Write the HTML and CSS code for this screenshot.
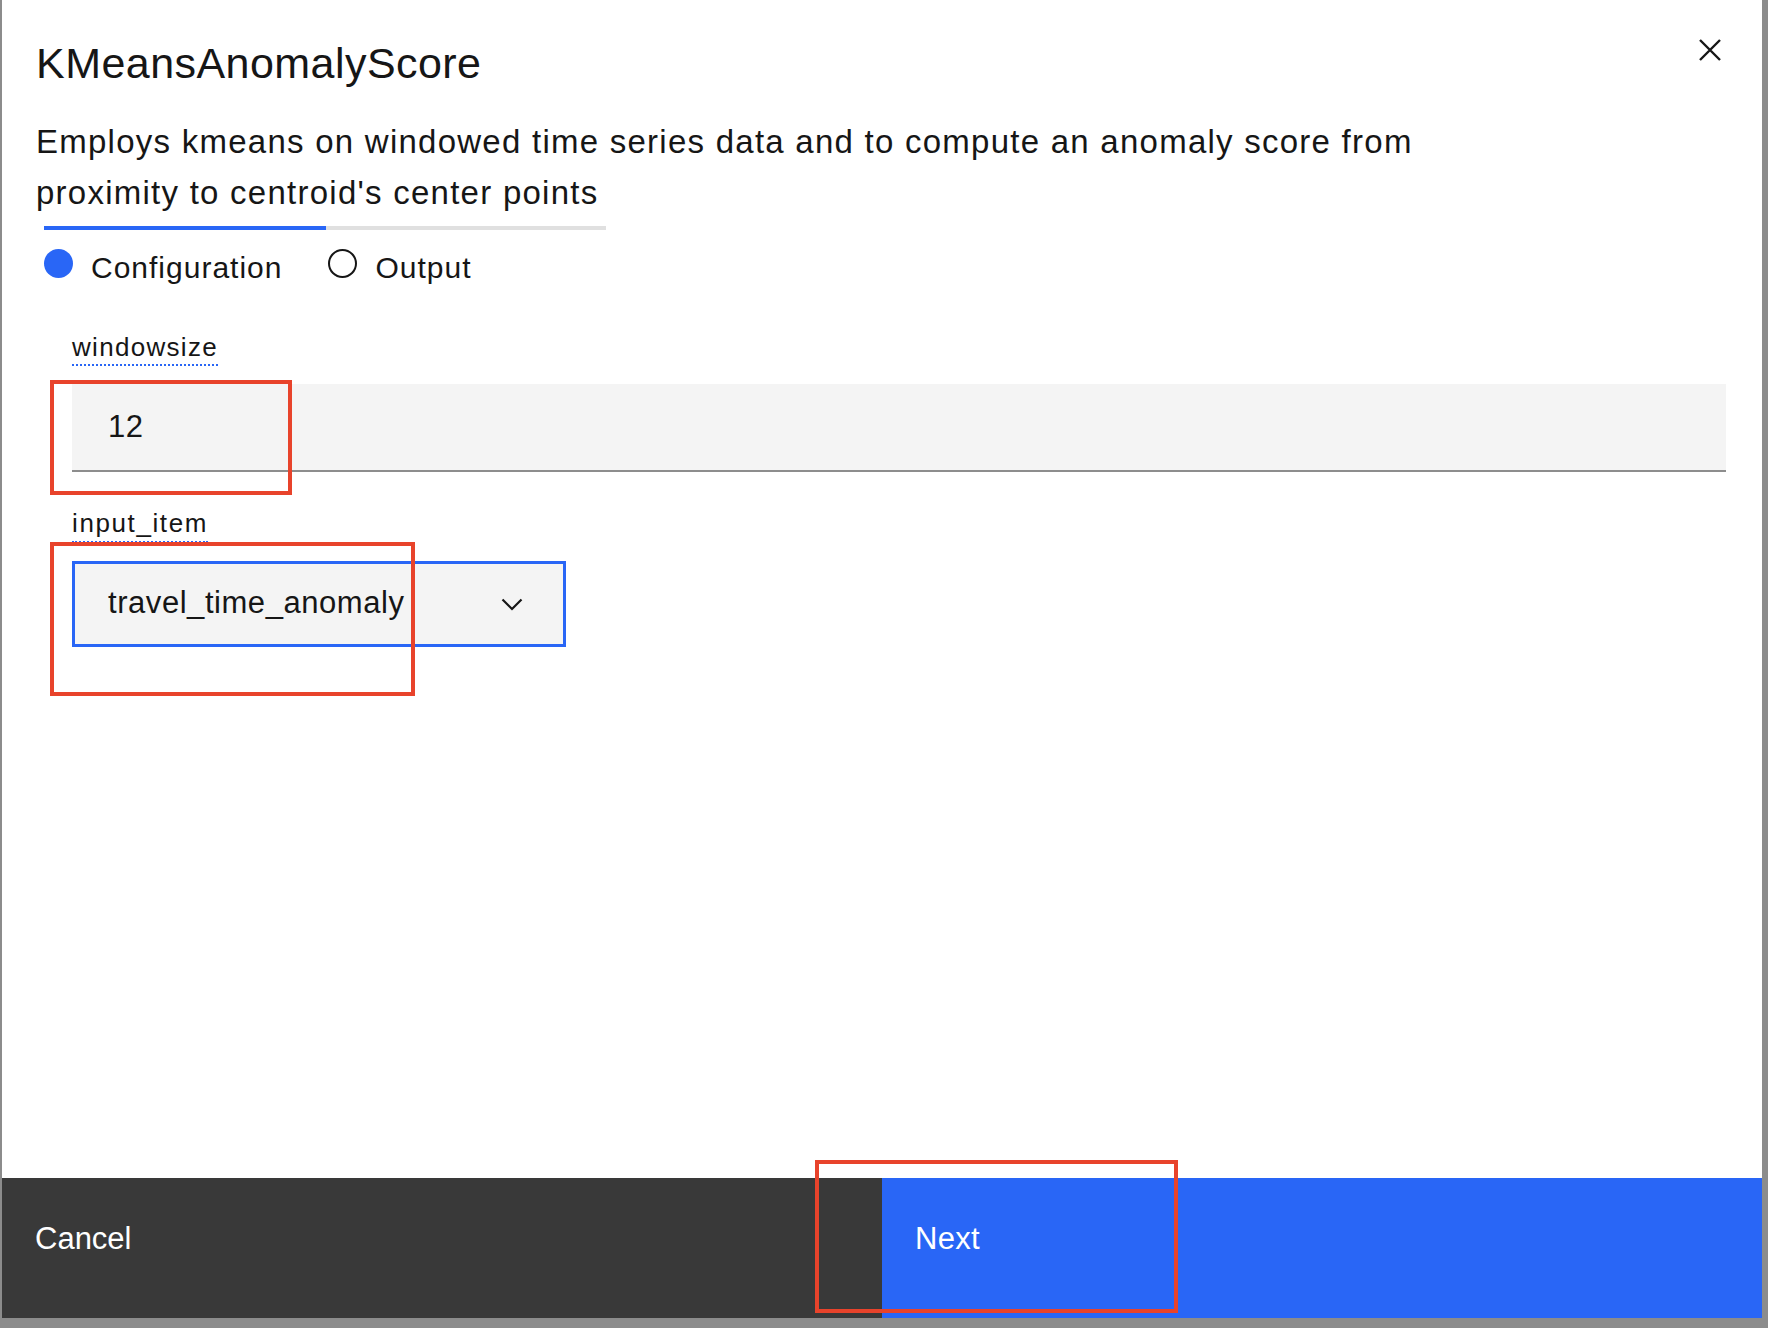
FILE: index.html
```html
<!DOCTYPE html>
<html lang="en">
<head>
<meta charset="utf-8">
<title>KMeansAnomalyScore</title>
<link rel="stylesheet" href="styles.css">
</head>
<body>
<div class="screen">
  <div class="modal">
    <header class="modal-header">
      <h2 class="title">KMeansAnomalyScore</h2>
      <p class="desc">Employs kmeans on windowed time series data and to compute an anomaly score from proximity to centroid's center points</p>
      <div class="progress"><div class="progress-fill"></div></div>
      <div class="steps">
        <div class="step"><span class="dot dot-active"></span><span class="step-label">Configuration</span></div>
        <div class="step"><span class="dot dot-open"></span><span class="step-label">Output</span></div>
      </div>
    </header>
    <button class="close" aria-label="Close">
      <svg width="22" height="22" viewBox="0 0 22 22"><path d="M1 1 L21 21 M21 1 L1 21" stroke="#161616" stroke-width="2.4" fill="none"/></svg>
    </button>
    <div class="modal-body">
      <div class="field">
        <div class="field-label">windowsize</div>
        <div class="text-input">12</div>
      </div>
      <div class="field field-second">
        <div class="field-label">input_item</div>
        <div class="dropdown">
          <span class="dropdown-value">travel_time_anomaly</span>
          <svg class="chevron" width="22" height="13" viewBox="0 0 22 13"><path d="M1.5 1.5 L11 11 L20.5 1.5" stroke="#161616" stroke-width="2.2" fill="none"/></svg>
        </div>
      </div>
    </div>
    <footer class="modal-footer">
      <button class="btn btn-secondary">Cancel</button>
      <button class="btn btn-primary">Next</button>
    </footer>
  </div>
  <div class="annot annot-1"></div>
  <div class="annot annot-2"></div>
  <div class="annot annot-3"></div>
</div>
</body>
</html>
```
FILE: styles.css
```css
* { box-sizing: border-box; }
html, body { margin: 0; padding: 0; }
body {
  width: 1768px;
  height: 1328px;
  background: #8c8c8c;
  font-family: "Liberation Sans", Arial, sans-serif;
  color: #161616;
  overflow: hidden;
}
.screen {
  position: relative;
  height: 1328px;
  padding: 0 6px 10px 2px;
}
.modal {
  position: relative;
  height: 1318px;
  background: #ffffff;
  display: flex;
  flex-direction: column;
}
.modal-header {
  padding: 37px 36px 0 34px;
}
.title {
  margin: 0;
  font-size: 43px;
  line-height: 52px;
  font-weight: 400;
  letter-spacing: 0.45px;
}
.desc {
  margin: 27px 0 0;
  font-size: 33px;
  line-height: 51px;
  letter-spacing: 1.25px;
  max-width: 1440px;
}
.progress {
  margin: 8px 0 0 8px;
  width: 562px;
  height: 4px;
  background: #e0e0e0;
}
.progress-fill {
  width: 282px;
  height: 4px;
  background: #2966f6;
}
.steps {
  display: flex;
  margin-top: 20px;
  padding-left: 8px;
}
.step {
  display: flex;
  align-items: flex-start;
  gap: 18px;
  font-size: 30px;
  line-height: 36px;
  letter-spacing: 1px;
}
.step + .step { margin-left: 46px; }
.dot {
  flex: none;
  width: 29px;
  height: 29px;
  border-radius: 50%;
  margin-top: -1px;
}
.dot-active { background: #2966f6; }
.dot-open { border: 2px solid #161616; }
.close {
  position: absolute;
  top: 39px;
  right: 41px;
  width: 22px;
  height: 22px;
  padding: 0;
  border: none;
  background: none;
  display: flex;
}
.modal-body {
  flex: 1;
  padding: 46px 36px 0 70px;
}
.field-label {
  width: max-content;
  font-size: 26px;
  line-height: 30px;
  letter-spacing: 1.3px;
  padding-bottom: 2px;
  border-bottom: 2px dotted #2966f6;
}
.text-input {
  margin-top: 18px;
  height: 88px;
  background: #f4f4f4;
  border-bottom: 2px solid #8d8d8d;
  padding-left: 36px;
  font-size: 31px;
  line-height: 86px;
  letter-spacing: 0.5px;
}
.field-second { margin-top: 36px; }
.field-second .field-label { padding-bottom: 3px; letter-spacing: 1.6px; }
.dropdown {
  margin-top: 18px;
  width: 494px;
  height: 86px;
  background: #f4f4f4;
  border: 3px solid #2966f6;
  display: flex;
  align-items: center;
  justify-content: space-between;
  padding: 0 40px 3px 33px;
  font-size: 31px;
  line-height: 36px;
  letter-spacing: 0.55px;
}
.chevron { margin-top: 3px; }
.modal-footer {
  height: 140px;
  display: flex;
}
.btn {
  border: none;
  margin: 0;
  font-family: inherit;
  font-size: 31px;
  line-height: 40px;
  color: #ffffff;
  text-align: left;
  padding: 41px 0 0 33px;
  display: flex;
  align-items: flex-start;
}
.btn-secondary {
  width: 880px;
  background: #393939;
}
.btn-primary {
  flex: 1;
  background: #2966f6;
  letter-spacing: 0.3px;
}
.annot {
  position: absolute;
  border: 4px solid #e8432b;
}
.annot-1 { left: 50px; top: 380px; width: 242px; height: 115px; }
.annot-2 { left: 50px; top: 542px; width: 365px; height: 154px; }
.annot-3 { left: 815px; top: 1160px; width: 363px; height: 153px; }
```
